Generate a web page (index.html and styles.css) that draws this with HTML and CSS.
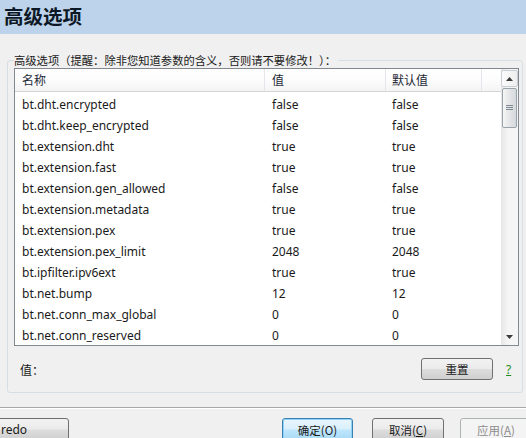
FILE: index.html
```html
<!DOCTYPE html>
<html lang="zh-CN">
<head>
    <meta charset="UTF-8">
    <title>高级选项</title>
    <link rel="stylesheet" href="styles.css">
</head>
<body>
    <div class="titlebar">高级选项</div>

    <fieldset class="group">
        <legend>高级选项（提醒：除非您知道参数的含义，否则请不要修改！）：</legend>

        <div class="listbox">
            <div class="list-main">
                <div class="row head">
                    <div class="cell">名称</div>
                    <div class="cell">值</div>
                    <div class="cell">默认值</div>
                    <div class="cell"></div>
                </div>
                <div class="row"><div class="cell">bt.dht.encrypted</div><div class="cell">false</div><div class="cell">false</div></div>
                <div class="row"><div class="cell">bt.dht.keep_encrypted</div><div class="cell">false</div><div class="cell">false</div></div>
                <div class="row"><div class="cell">bt.extension.dht</div><div class="cell">true</div><div class="cell">true</div></div>
                <div class="row"><div class="cell">bt.extension.fast</div><div class="cell">true</div><div class="cell">true</div></div>
                <div class="row"><div class="cell">bt.extension.gen_allowed</div><div class="cell">false</div><div class="cell">false</div></div>
                <div class="row"><div class="cell">bt.extension.metadata</div><div class="cell">true</div><div class="cell">true</div></div>
                <div class="row"><div class="cell">bt.extension.pex</div><div class="cell">true</div><div class="cell">true</div></div>
                <div class="row"><div class="cell">bt.extension.pex_limit</div><div class="cell">2048</div><div class="cell">2048</div></div>
                <div class="row"><div class="cell">bt.ipfilter.ipv6ext</div><div class="cell">true</div><div class="cell">true</div></div>
                <div class="row"><div class="cell">bt.net.bump</div><div class="cell">12</div><div class="cell">12</div></div>
                <div class="row"><div class="cell">bt.net.conn_max_global</div><div class="cell">0</div><div class="cell">0</div></div>
                <div class="row"><div class="cell">bt.net.conn_reserved</div><div class="cell">0</div><div class="cell">0</div></div>
            </div>
            <div class="scrollbar">
                <div class="sb-btn">
                    <svg width="7" height="4" viewBox="0 0 7 4"><path d="M0 4 L3.5 0 L7 4 Z" fill="#3a3a3a"/></svg>
                </div>
                <div class="sb-track">
                    <div class="sb-thumb">
                        <svg width="7" height="6" viewBox="0 0 7 6"><path d="M0 0.5 H7 M0 2.5 H7 M0 4.5 H7" stroke="#7d8792" stroke-width="1"/></svg>
                    </div>
                </div>
                <div class="sb-btn">
                    <svg width="7" height="4" viewBox="0 0 7 4"><path d="M0 0 L3.5 4 L7 0 Z" fill="#3a3a3a"/></svg>
                </div>
            </div>
        </div>

        <div class="value-row">
            <span class="value-label">值：</span>
            <span class="spacer"></span>
            <button class="btn reset">重置</button>
            <a class="help">?</a>
        </div>
    </fieldset>

    <div class="separator"></div>

    <div class="footer">
        <button class="btn redo">redo</button>
        <span class="spacer"></span>
        <button class="btn default">确定(O)</button>
        <button class="btn">取消(<u>C</u>)</button>
        <button class="btn disabled">应用(<u>A</u>)</button>
    </div>
</body>
</html>
```

FILE: styles.css
```css
body {
    margin: 0;
    width: 526px;
    height: 438px;
    overflow: hidden;
    background: #f0f0f0;
    font-family: "Noto Sans", "Noto Sans CJK SC", sans-serif;
    font-size: 12px;
    color: #1a1a1a;
}
.titlebar {
    height: 34px;
    line-height: 32px;
    padding-left: 4px;
    background: #bdd3eb;
    font-family: "Noto Sans CJK SC", sans-serif;
    font-size: 19.5px;
    font-weight: bold;
    color: #0d1826;
}
.group {
    margin: 19px 3px 0 7px;
    padding: 1px 3px 12px 6px;
    border: 1px solid #d5dfe5;
    border-radius: 3px;
}
.group legend {
    padding: 0 2px 0 0;
    font-family: "Noto Sans CJK SC", sans-serif;
    font-size: 11.3px;
    line-height: 14px;
}
.listbox {
    display: flex;
    height: 278px;
    box-sizing: border-box;
    border: 1px solid #828790;
    background: white;
    overflow: hidden;
}
.list-main {
    flex: 1;
    overflow: hidden;
}
.row {
    display: grid;
    grid-template-columns: 250px 121px 96px 1fr;
    height: 21px;
    line-height: 21px;
}
.row .cell {
    padding-left: 7px;
    white-space: nowrap;
}
.row .cell:nth-child(3) {
    padding-left: 6px;
}
.row.head {
    height: 23px;
    line-height: 22px;
    margin-bottom: 2px;
    border-bottom: 1px solid #d5d5d5;
    background: linear-gradient(#ffffff, #fbfbfb 60%, #f4f4f4);
    font-family: "Noto Sans CJK SC", sans-serif;
    font-size: 12px;
    color: #1e2a36;
    box-sizing: border-box;
}
.row.head .cell {
    border-right: 1px solid #e3e6ea;
}
.row.head .cell:last-child {
    border-right: none;
}
.scrollbar {
    width: 17px;
    display: flex;
    flex-direction: column;
    background: linear-gradient(to right, #e6e6e6, #f5f5f5 40%, #f5f5f5);
}
.sb-btn {
    height: 17px;
    display: flex;
    align-items: center;
    justify-content: center;
}
.sb-btn:first-child {
    margin-top: 1px;
    height: 17px;
    box-sizing: border-box;
    border: 1px solid #c9ced4;
    border-radius: 2px;
    background: linear-gradient(to right, #fbfbfb, #eeeeee);
}
.sb-track {
    flex: 1;
}
.sb-thumb {
    height: 40px;
    margin: 1px 1px 0 1px;
    box-sizing: border-box;
    border: 1px solid #9aa2ab;
    border-radius: 2px;
    background: linear-gradient(to right, #f6f6f6, #e3e5e7 50%, #d6d9dc);
    display: flex;
    align-items: center;
    justify-content: center;
}
.value-row {
    display: flex;
    align-items: center;
    height: 22px;
    margin-top: 12px;
    padding-left: 6px;
}
.value-label {
    font-family: "Noto Sans CJK SC", sans-serif;
    font-size: 12px;
}
.spacer {
    flex: 1;
}
.btn {
    height: 23px;
    width: 72px;
    padding: 0;
    border: 1px solid #707070;
    border-radius: 3px;
    background: linear-gradient(#f2f2f2, #ebebeb 48%, #dddddd 52%, #cfcfcf);
    font-family: "Noto Sans CJK SC", sans-serif;
    font-size: 11.5px;
    color: #1a1a1a;
}
.btn.reset {
    height: 22px;
}
.help {
    width: 12px;
    margin: 0 1px 0 13px;
    color: #1f8a1f;
    text-decoration: underline;
    font-size: 12px;
}
.separator {
    height: 0;
    margin-top: 14px;
    border-top: 1px solid #a7a7a7;
    border-bottom: 1px solid #ffffff;
}
.footer {
    display: flex;
    margin-top: 9px;
}
.btn.redo {
    margin-left: -3px;
    text-align: left;
    padding-left: 3px;
    font-family: "Noto Sans", sans-serif;
    font-size: 12px;
}
.btn.default {
    width: 71px;
    margin-right: 19px;
    border-color: #3c7fb1;
    background: linear-gradient(#eaf6fd, #d9f0fc 48%, #bee6fd 52%, #a7d9f5);
    box-shadow: inset 0 0 0 1px #8fd4f8;
}
.btn.disabled {
    margin-left: 16px;
    margin-right: -6px;
    border-color: #adb2b5;
    background: #f4f4f4;
    color: #8d8d8d;
}
```
